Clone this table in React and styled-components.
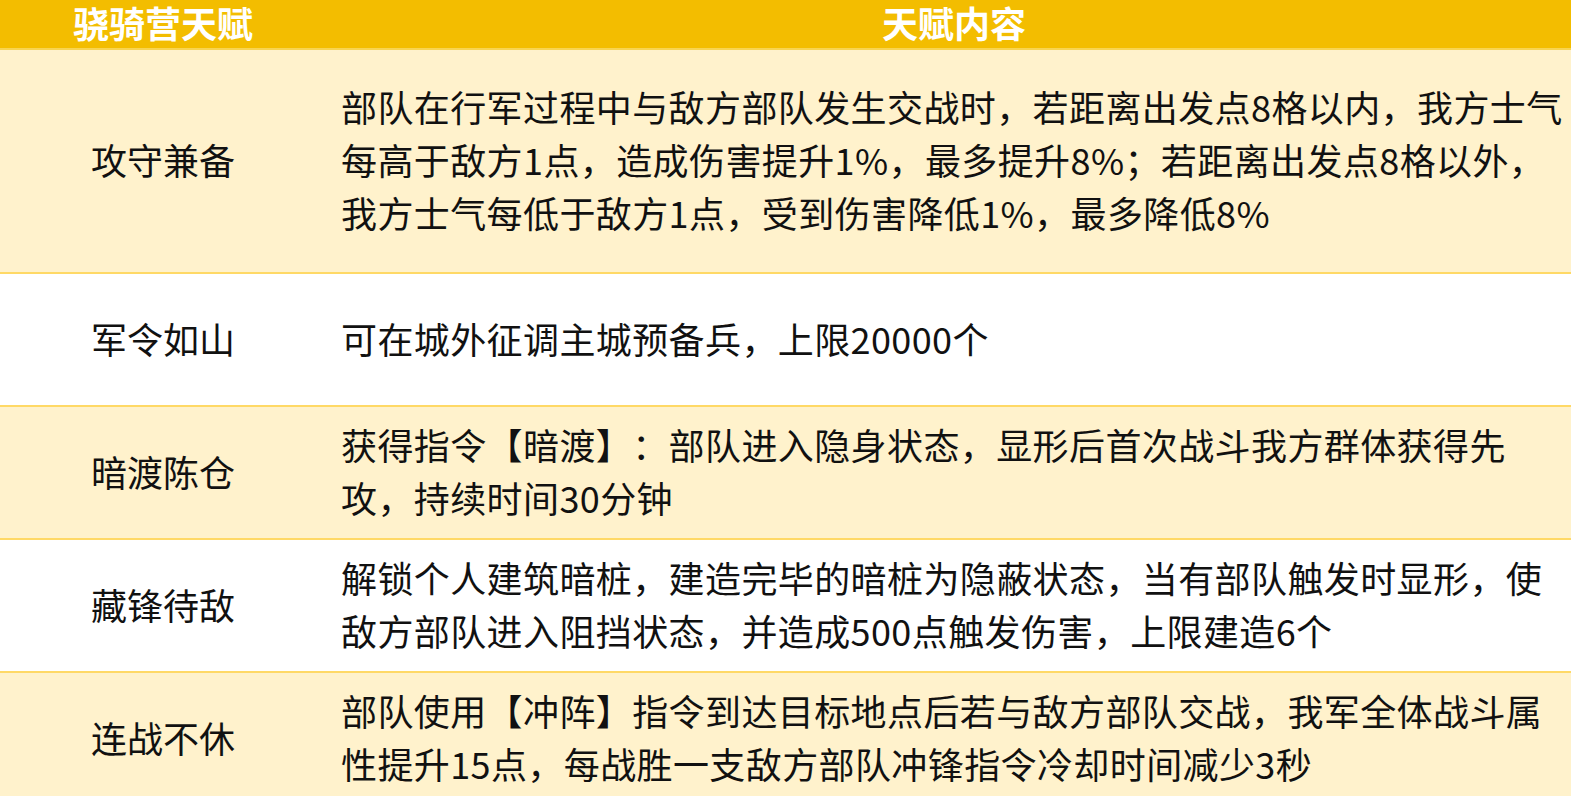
import React from 'react';
import styled, { createGlobalStyle } from 'styled-components';

const GlobalStyle = createGlobalStyle`
  html, body {
    margin: 0;
    padding: 0;
    background: #ffffff;
    overflow: hidden;
  }
  body {
    font-family: "Noto Sans CJK SC", "Microsoft YaHei", sans-serif;
    color: #111111;
    text-spacing-trim: space-all;
  }
`;

const Table = styled.div`
  width: 1582px;
  display: grid;
  grid-template-columns: 326px 1256px;
`;

const HeadCell = styled.div`
  box-sizing: border-box;
  height: 50px;
  padding-bottom: 4px;
  background-color: #f3bd00;
  border-bottom: 2px solid #f8d451;
  display: flex;
  align-items: center;
  justify-content: center;
  color: #ffffff;
  font-size: 36px;
  font-weight: 700;
  line-height: 44px;
`;

const Cell = styled.div`
  box-sizing: border-box;
  height: ${(p) => p.$h}px;
  padding-bottom: 3px;
  padding-left: ${(p) => (p.$center ? '0' : '15px')};
  background-color: ${(p) => (p.$alt ? '#fff2cc' : '#ffffff')};
  border-bottom: 2px solid #ffd966;
  display: flex;
  align-items: center;
  justify-content: ${(p) => (p.$center ? 'center' : 'flex-start')};
  font-size: 36px;
  line-height: 53px;
  letter-spacing: ${(p) => (p.$center ? '0' : '0.4px')};
`;

const Lines = styled.div`
  display: flex;
  flex-direction: column;
`;

const Line = styled.span`
  white-space: nowrap;
`;

const rows = [
  {
    name: '攻守兼备',
    h: 224,
    lines: [
      '部队在行军过程中与敌方部队发生交战时，若距离出发点8格以内，我方士气',
      '每高于敌方1点，造成伤害提升1%，最多提升8%；若距离出发点8格以外，',
      '我方士气每低于敌方1点，受到伤害降低1%，最多降低8%',
    ],
  },
  {
    name: '军令如山',
    h: 133,
    lines: ['可在城外征调主城预备兵，上限20000个'],
  },
  {
    name: '暗渡陈仓',
    h: 133,
    lines: [
      '获得指令【暗渡】：部队进入隐身状态，显形后首次战斗我方群体获得先',
      '攻，持续时间30分钟',
    ],
  },
  {
    name: '藏锋待敌',
    h: 133,
    lines: [
      '解锁个人建筑暗桩，建造完毕的暗桩为隐蔽状态，当有部队触发时显形，使',
      '敌方部队进入阻挡状态，并造成500点触发伤害，上限建造6个',
    ],
  },
  {
    name: '连战不休',
    h: 133,
    lines: [
      '部队使用【冲阵】指令到达目标地点后若与敌方部队交战，我军全体战斗属',
      '性提升15点，每战胜一支敌方部队冲锋指令冷却时间减少3秒',
    ],
  },
];

export default function App() {
  return (
    <>
      <GlobalStyle />
      <Table>
        <HeadCell>骁骑营天赋</HeadCell>
        <HeadCell>天赋内容</HeadCell>
        {rows.map((row, i) => (
          <React.Fragment key={row.name}>
            <Cell $h={row.h} $alt={i % 2 === 0} $center>
              {row.name}
            </Cell>
            <Cell $h={row.h} $alt={i % 2 === 0}>
              <Lines>
                {row.lines.map((l) => (
                  <Line key={l}>{l}</Line>
                ))}
              </Lines>
            </Cell>
          </React.Fragment>
        ))}
      </Table>
    </>
  );
}
